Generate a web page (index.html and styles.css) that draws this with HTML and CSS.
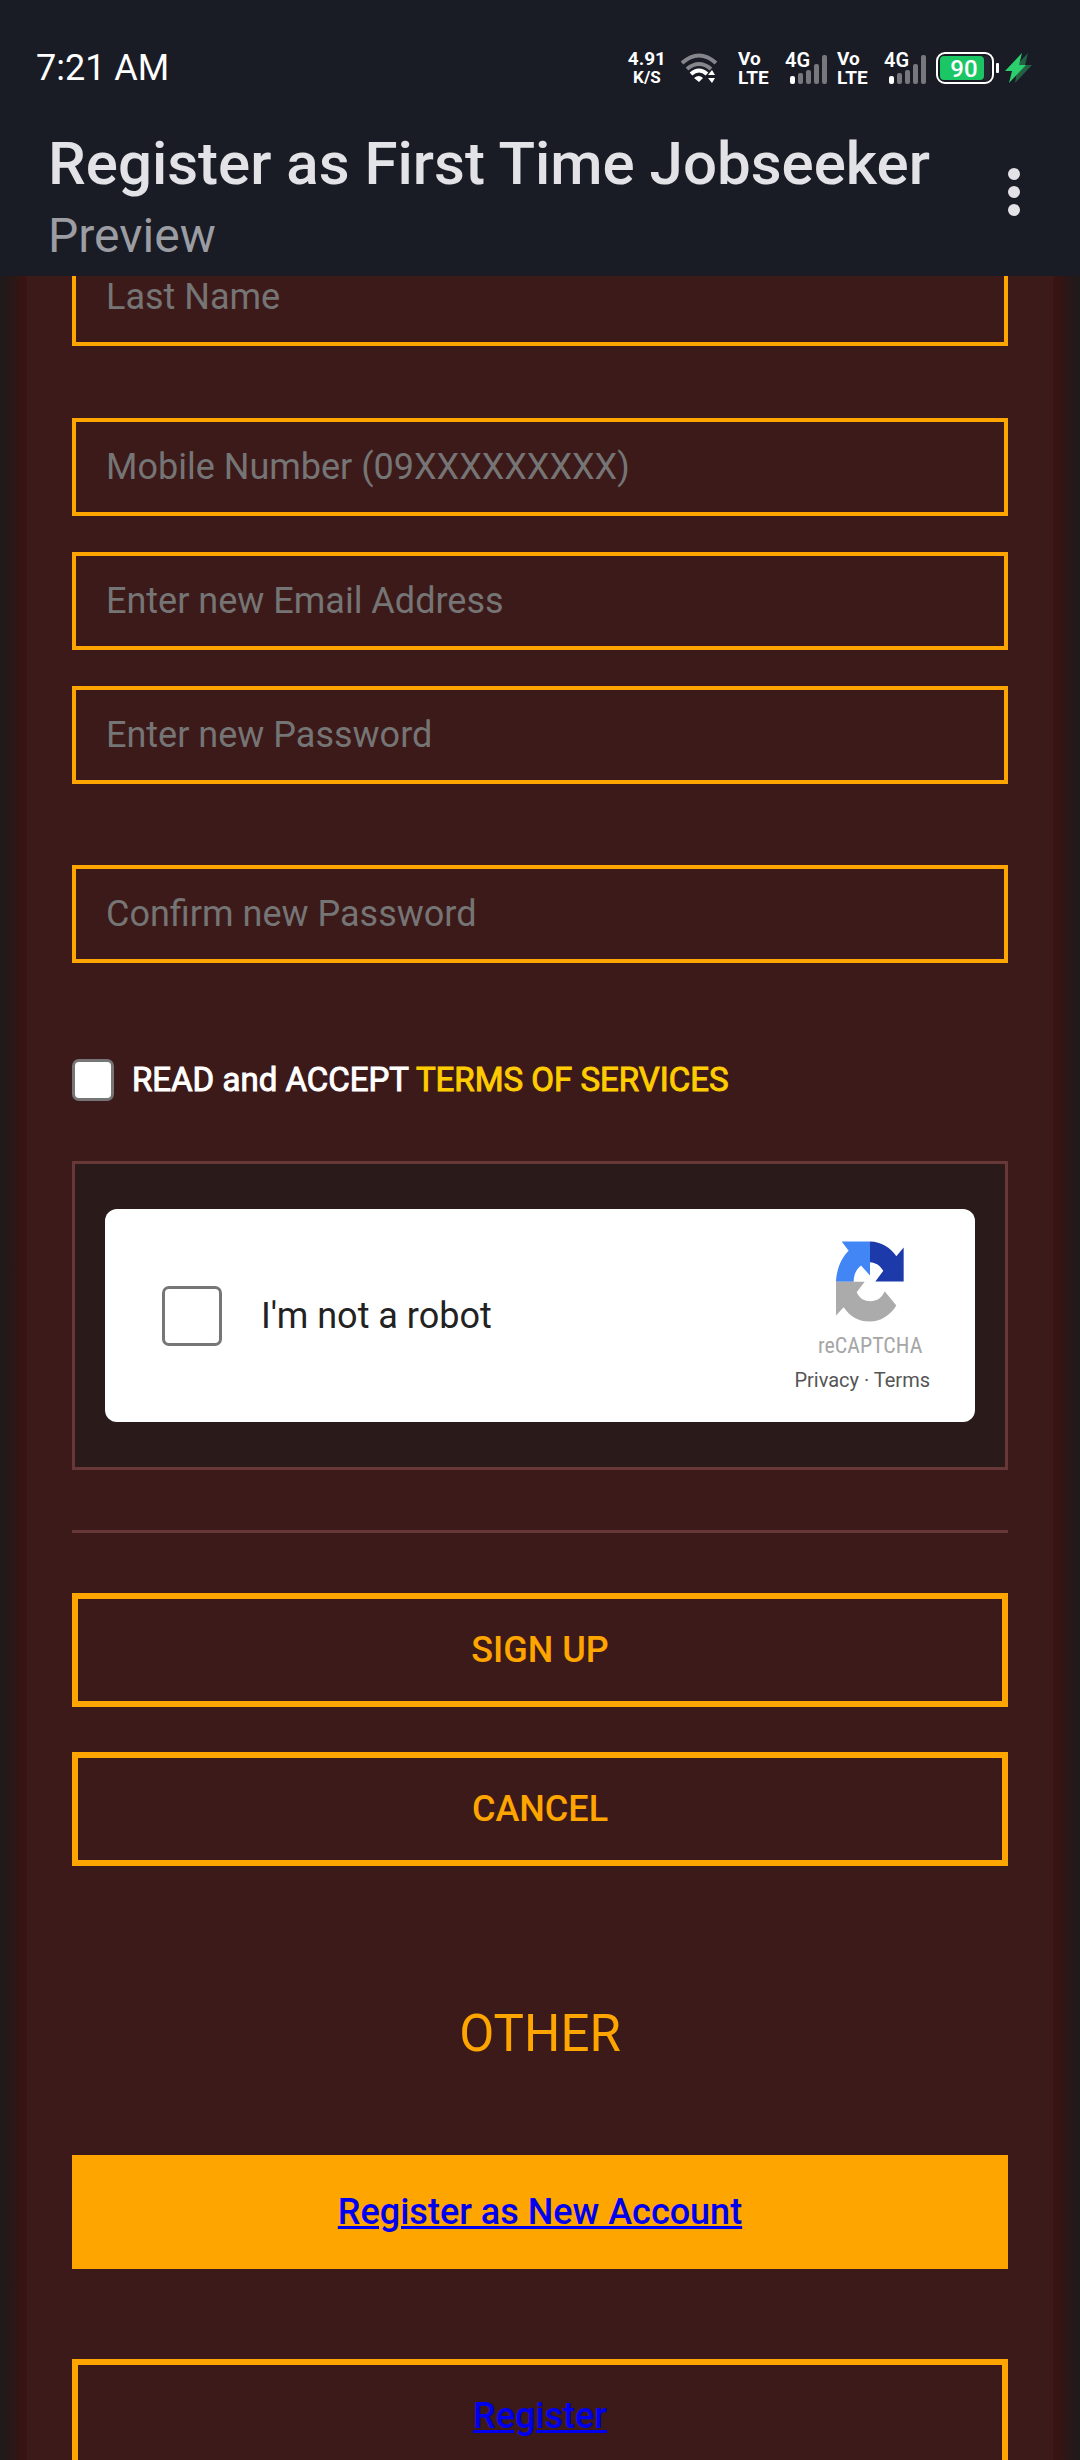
FILE: index.html
```html
<!DOCTYPE html>
<html lang="en">
<head>
<meta charset="utf-8">
<meta name="viewport" content="width=device-width, initial-scale=1">
<title>Register as First Time Jobseeker</title>
<link rel="stylesheet" href="styles.css">
</head>
<body>
<div class="screen">
  <header class="top">
    <div class="status">
      <span class="clock">7:21 AM</span>
      <div class="indicators">
        <span class="speed"><span>4.91</span><small>K/S</small></span>
        <svg class="wifi" viewBox="0 0 38 32" width="38" height="32" aria-hidden="true">
          <g fill="none" stroke-width="4">
            <path d="M2 11Q19 -4 36 11M7 17Q19 7 31 17" stroke="#85868c"/>
            <path d="M11 22Q19 15 27 22" stroke="#fff"/>
          </g>
          <path d="M14 26Q19 22 23 26L19 30ZM28 23L32 18L35 23ZM28 26H35L32 31Z" fill="#fff"/>
        </svg>
        <span class="volte"><span>Vo</span><span>LTE</span></span>
        <svg class="signal" viewBox="0 -4 44 44" width="44" height="44">
          <text x="0" y="17" class="net">4G</text>
          <g fill="#77787d"><rect x="13" y="23" width="5" height="11" rx="2"/><rect x="21" y="20" width="5" height="14" rx="2"/><rect x="29" y="14" width="5" height="20" rx="2"/><rect x="37" y="5" width="5" height="29" rx="2"/></g>
          <rect x="5" y="26" width="5" height="8" rx="2" fill="#fff"/>
        </svg>
        <span class="volte"><span>Vo</span><span>LTE</span></span>
        <svg class="signal" viewBox="0 -4 44 44" width="44" height="44">
          <text x="0" y="17" class="net">4G</text>
          <g fill="#77787d"><rect x="13" y="23" width="5" height="11" rx="2"/><rect x="21" y="20" width="5" height="14" rx="2"/><rect x="29" y="14" width="5" height="20" rx="2"/><rect x="37" y="5" width="5" height="29" rx="2"/></g>
          <rect x="5" y="26" width="5" height="8" rx="2" fill="#fff"/>
        </svg>
        <svg class="battery" viewBox="0 0 64 32" width="64" height="32">
          <rect x="1" y="1" width="56" height="30" rx="8" fill="none" stroke="#fff" stroke-width="2"/>
          <rect x="4" y="4" width="44" height="24" rx="4" fill="#1bc765"/>
          <path d="M48 4H50Q54 4 54 8V24Q54 28 50 28H48Z" fill="#242630"/>
          <rect x="60" y="11" width="3" height="10" rx="1" fill="#fff"/>
          <text x="28" y="25" class="charge">90</text>
        </svg>
        <svg class="bolt" viewBox="0 0 27 30" width="27" height="30" aria-hidden="true">
          <path d="M23 0L6 18H12L10 30L27 12H20Z" fill="#236143"/>
          <path d="M17 0L0 18H7L4 30L21 12H14Z" fill="#2bcf6e"/>
        </svg>
      </div>
    </div>
    <div class="appbar">
      <div class="titles">
        <h1>Register as First Time Jobseeker</h1>
        <p>Preview</p>
      </div>
      <button class="more" type="button" aria-label="More options">
        <svg viewBox="0 0 12 48" width="12" height="48" fill="#e3e2e6"><circle cx="6" cy="6" r="6"/><circle cx="6" cy="24" r="6"/><circle cx="6" cy="42" r="6"/></svg>
      </button>
    </div>
  </header>
  <main class="view">
    <form class="panel">
      <div class="fields">
        <input class="field names-end" type="text" placeholder="Last Name" aria-label="Last Name">
        <input class="field" type="tel" placeholder="Mobile Number (09XXXXXXXXX)" aria-label="Mobile Number">
        <input class="field" type="email" placeholder="Enter new Email Address" aria-label="Email Address">
        <input class="field" type="password" placeholder="Enter new Password" aria-label="New Password">
        <input class="field confirm" type="password" placeholder="Confirm new Password" aria-label="Confirm new Password">
      </div>
      <div class="terms">
        <input class="tick" type="checkbox" id="terms">
        <label for="terms">READ and ACCEPT <a href="#terms">TERMS OF SERVICES</a></label>
      </div>
      <div class="captcha">
        <div class="captcha-card">
          <input class="robot-tick" type="checkbox" id="robot">
          <label class="robot-label" for="robot">I'm not a robot</label>
          <div class="brand">
            <div class="brand-mark">
              <svg viewBox="288 302 204 242" width="68" height="81" aria-hidden="true">
                <path d="M305 303H390V405L363 375C349 386 341 402 341 424H288C289 388 304 352 326 331Z" fill="#4285f4"/>
                <path d="M390 303C424 304 451 321 469 347L491 321V423H406L430 391C420 374 407 366 390 365Z" fill="#1c3aa9"/>
                <path d="M288 424H374L350 455C359 474 374 482 391 482C411 482 426 471 434 452L469 495C450 526 421 543 389 543C356 543 330 528 311 500L288 525Z" fill="#ababab"/>
              </svg>
              <span class="brand-name">reCAPTCHA</span>
            </div>
            <span class="brand-links"><a href="#privacy">Privacy</a> · <a href="#tos">Terms</a></span>
          </div>
        </div>
      </div>
      <hr class="rule">
      <div class="actions">
        <button class="btn" type="submit">SIGN UP</button>
        <button class="btn" type="button">CANCEL</button>
      </div>
      <h2 class="other">OTHER</h2>
      <div class="links">
        <a class="btn solid" href="#new">Register as New Account</a>
        <a class="btn" href="#register">Register</a>
      </div>
    </form>
  </main>
</div>
</body>
</html>
```
FILE: styles.css
```css
* { box-sizing: border-box; }
body {
  margin: 0;
  background: #3d1a1a;
  color: #fff;
  font-family: Roboto, "Liberation Sans", sans-serif;
  font-size: 36px;
}
.screen {
  display: flex;
  flex-direction: column;
  height: 100vh;
}
.top {
  flex: none;
  height: 276px;
  background: #191b25;
}
.status {
  display: flex;
  align-items: center;
  justify-content: space-between;
  height: 132px;
  padding: 4px 48px 0 36px;
}
.clock { line-height: 40px; }
.indicators {
  display: flex;
  align-items: center;
  font-weight: 700;
}
.speed, .volte {
  display: flex;
  flex-direction: column;
  font-size: 19px;
  line-height: 19px;
}
.speed { align-items: center; margin-right: 14px; }
.speed small { font-size: 17px; }
.wifi { margin-right: 20px; }
.volte { width: 47px; }
.net { font-size: 20px; font-weight: 600; fill: #fff; }
.signal { margin-right: 8px; }
.charge { font-size: 24px; font-weight: 500; fill: #fff; text-anchor: middle; }
.battery { margin-right: 5px; }

.appbar {
  display: flex;
  align-items: flex-start;
  justify-content: space-between;
  padding: 0 60px 0 48px;
}
.titles h1 {
  margin: 0;
  color: #e3e2e6;
  font-size: 60px;
  font-weight: 500;
  line-height: 64px;
}
.titles p {
  margin: 0;
  color: #9c9da2;
  font-size: 48px;
  line-height: 80px;
}
.more {
  display: flex;
  margin-top: 36px;
  padding: 0;
  border: 0;
  background: none;
}

.view {
  flex: 1;
  min-height: 0;
  overflow: hidden;
  padding: 0 27px;
  background:
    linear-gradient(to right, #1f1b1b, #2a1717 12px, #3a1313 24px, #3a1313 27px, transparent 27px),
    linear-gradient(to left, #1f1b1b, #2a1717 12px, #3a1313 24px, #3a1313 27px, #3d1a1a 27px);
}
.panel {
  display: flex;
  flex-direction: column;
  margin-top: -28px;
  padding: 0 45px;
  background: #3d1a1a;
}
.fields {
  display: flex;
  flex-direction: column;
  gap: 36px;
}
.field {
  width: 100%;
  height: 98px;
  padding: 0 30px;
  border: 4px solid #ffa500;
  border-radius: 0;
  background: transparent;
  color: #fff;
  font: inherit;
}
.field::placeholder { color: #757575; opacity: 1; }
.names-end { margin-bottom: 36px; }
.confirm { margin-top: 45px; }
.terms {
  display: flex;
  align-items: center;
  gap: 18px;
  margin-top: 96px;
  font-size: 33px;
  line-height: 42px;
  -webkit-text-stroke: 1px currentColor;
}
.terms a { color: #ffcc00; text-decoration: none; }
.tick, .robot-tick {
  appearance: none;
  flex: none;
  width: 42px;
  height: 42px;
  margin: 0;
  border: 3px solid #767676;
  border-radius: 7px;
  background: #fff;
}
.robot-tick { width: 60px; height: 60px; }
.captcha {
  margin-top: 60px;
  padding: 45px 30px;
  border: 3px solid #683838;
  background: #2a1a1a;
}
.captcha-card {
  display: flex;
  align-items: center;
  height: 213px;
  padding: 0 45px 0 57px;
  border-radius: 12px;
  background: #fff;
  color: #222;
}
.robot-label { flex: 1; margin-left: 39px; }
.brand {
  display: flex;
  flex-direction: column;
  align-items: center;
  padding-top: 8px;
}
.brand-mark {
  display: flex;
  flex-direction: column;
  align-items: center;
  gap: 8px;
  margin-left: 16px;
}
.brand-name {
  color: #a6a6a6;
  font-family: "Roboto Condensed", "Liberation Sans Narrow", Roboto, sans-serif;
  font-size: 22px;
  line-height: 32px;
}
.brand-links {
  color: #555;
  font-size: 20px;
  line-height: 36px;
}
.brand-links a { color: inherit; text-decoration: none; }
.rule {
  width: 100%;
  height: 3px;
  margin: 60px 0;
  border: 0;
  background: #683838;
}
.actions {
  display: flex;
  flex-direction: column;
  gap: 45px;
}
.btn {
  display: flex;
  align-items: center;
  justify-content: center;
  width: 100%;
  height: 114px;
  padding: 0;
  border: 6px solid #ffa500;
  background: transparent;
  color: #ffa500;
  font: inherit;
  font-weight: 500;
}
a.btn { color: #00e; text-decoration: underline; }
.solid { background: #ffa500; }
.other {
  margin: 136px 0 89px;
  color: #ffa500;
  font-size: 51px;
  font-weight: 400;
  line-height: 64px;
  text-align: center;
}
.links {
  display: flex;
  flex-direction: column;
  gap: 90px;
}
```
